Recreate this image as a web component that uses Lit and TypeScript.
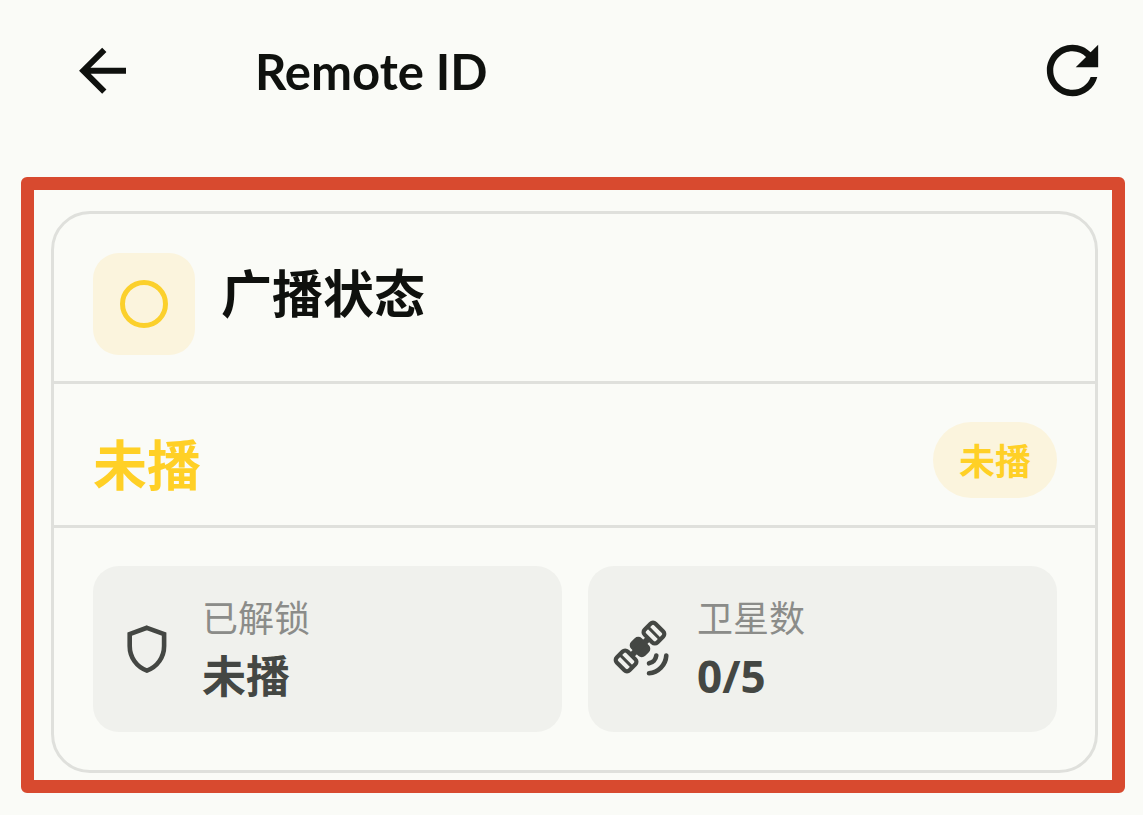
import { LitElement, html, css, svg } from "lit";
import { customElement, property } from "lit/decorators.js";

const shieldIcon = svg`
  <path d="M27.9 6.8 45.1 13V25C45.1 36.5 38 46 27.9 49.6 17.8 46 10.7 36.5 10.7 25V13Z"
    fill="none" stroke="currentColor" stroke-width="4.6" />
`;

const satelliteIcon = svg`
  <g transform="translate(26 26) rotate(-45)" fill="none" stroke="currentColor">
    <rect x="-7.5" y="-10" width="15" height="20" rx="5" fill="currentColor" stroke="none" />
    <path d="M-12 0H12" stroke-width="6" />
    <rect x="12" y="-9" width="15.4" height="18" rx="3.5" stroke-width="4.2" />
    <path d="M19.7 -8V8" stroke-width="3" />
    <rect x="-27.4" y="-9" width="15.4" height="18" rx="3.5" stroke-width="4.2" />
    <path d="M-19.7 -8V8" stroke-width="3" />
  </g>
  <path d="M42.3 34.5A9 9 0 0 1 35 42.3M52.3 34.5A19 19 0 0 1 35 52.3"
    fill="none" stroke="currentColor" stroke-width="4.6" stroke-linecap="round" />
`;

@customElement("stat-tile")
export class StatTile extends LitElement {
  @property() label = "";
  @property() value = "";
  @property() icon = "shield";

  static styles = css`
    :host {
      display: flex;
      align-items: center;
      gap: 26px;
      padding: 26px;
      border-radius: 26px;
      background: #f0f1ed;
      color: #444743;
    }
    .icon {
      flex: none;
      width: 57px;
      height: 57px;
      overflow: visible;
    }
    .facts {
      margin: 0;
      min-width: 0;
    }
    .label {
      font-size: 36px;
      line-height: 54px;
      color: #8b8c89;
    }
    .value {
      margin: 0;
      font-size: 44px;
      line-height: 60px;
      font-weight: 700;
    }
  `;

  render() {
    return html`
      <svg class="icon" viewBox="0 0 57 57" aria-hidden="true">
        ${this.icon === "satellite" ? satelliteIcon : shieldIcon}
      </svg>
      <dl class="facts">
        <dt class="label">${this.label}</dt>
        <dd class="value">${this.value}</dd>
      </dl>
    `;
  }
}

@customElement("app-root")
export class AppRoot extends LitElement {
  static styles = css`
    :host {
      display: block;
      box-sizing: border-box;
      min-height: 100vh;
      padding-bottom: 22px;
      background: #fafbf7;
      color: #0f110e;
      font-family: "Noto Sans", "Noto Sans CJK SC", sans-serif;
    }
    .bar {
      display: flex;
      align-items: center;
      gap: 114px;
      padding: 32px 32px 68px 64px;
    }
    .action {
      flex: none;
      width: 77px;
      height: 77px;
      padding: 0;
      border: 0;
      background: none;
      color: inherit;
      cursor: pointer;
    }
    .action svg {
      display: block;
      width: 100%;
      height: 100%;
    }
    .title {
      flex: 1;
      margin: 0;
      font-family: Lato, "Noto Sans", sans-serif;
      font-size: 49px;
      line-height: 64px;
      font-weight: 700;
    }
    .frame {
      margin: 0 18px 0 21px;
      padding: 21px 14px 7px 17px;
      border: 13px solid #d84a2f;
      border-radius: 6px;
    }
    .card {
      border: 3px solid #dfe0dc;
      border-radius: 39px;
    }
    .head,
    .status {
      display: flex;
      border-bottom: 3px solid #dfe0dc;
    }
    .head {
      gap: 26px;
      padding: 39px 39px 26px;
    }
    .mark {
      flex: none;
      width: 102px;
      height: 102px;
      border-radius: 26px;
      background: #fbf4dd;
      color: #fbd02c;
    }
    .heading {
      margin: 0;
      font-size: 51px;
      line-height: 80px;
      font-weight: 700;
    }
    .status {
      align-items: flex-end;
      justify-content: space-between;
      padding: 38px 38px 27px 39px;
      color: #ffd026;
      font-weight: 700;
    }
    .state {
      font-size: 54px;
      line-height: 66px;
    }
    .badge {
      padding: 4px 26px 0;
      border-radius: 38px;
      background: #fbf4dd;
      font-size: 36px;
      line-height: 72px;
    }
    .tiles {
      display: grid;
      grid-template-columns: 1fr 1fr;
      gap: 26px;
      padding: 38px 38px 38px 39px;
    }
  `;

  render() {
    return html`
      <header class="bar">
        <button class="action" type="button" aria-label="返回">
          <svg viewBox="0 0 77 77" fill="none" stroke="currentColor" stroke-width="6">
            <path d="M62 38.7H18M40.3 17.9 19.3 38.7 40.3 59.7" />
          </svg>
        </button>
        <h1 class="title">Remote ID</h1>
        <button class="action" type="button" aria-label="刷新">
          <svg viewBox="0 0 24 24" fill="currentColor">
            <path
              d="M17.65 6.35C16.2 4.9 14.21 4 12 4c-4.42 0-7.99 3.58-7.99 8s3.57 8 7.99 8c3.73 0 6.84-2.55 7.73-6h-2.08c-.82 2.33-3.04 4-5.65 4-3.31 0-6-2.69-6-6s2.69-6 6-6c1.66 0 3.14.69 4.22 1.78L13 11h7V4l-2.35 2.35z"
            />
          </svg>
        </button>
      </header>
      <main class="frame">
        <section class="card">
          <div class="head">
            <svg class="mark" viewBox="0 0 102 102" aria-hidden="true">
              <circle cx="51" cy="51" r="21.5" fill="none" stroke="currentColor" stroke-width="5" />
            </svg>
            <h2 class="heading">广播状态</h2>
          </div>
          <div class="status">
            <span class="state">未播</span>
            <span class="badge">未播</span>
          </div>
          <div class="tiles">
            <stat-tile icon="shield" label="已解锁" value="未播"></stat-tile>
            <stat-tile icon="satellite" label="卫星数" value="0/5"></stat-tile>
          </div>
        </section>
      </main>
    `;
  }
}
